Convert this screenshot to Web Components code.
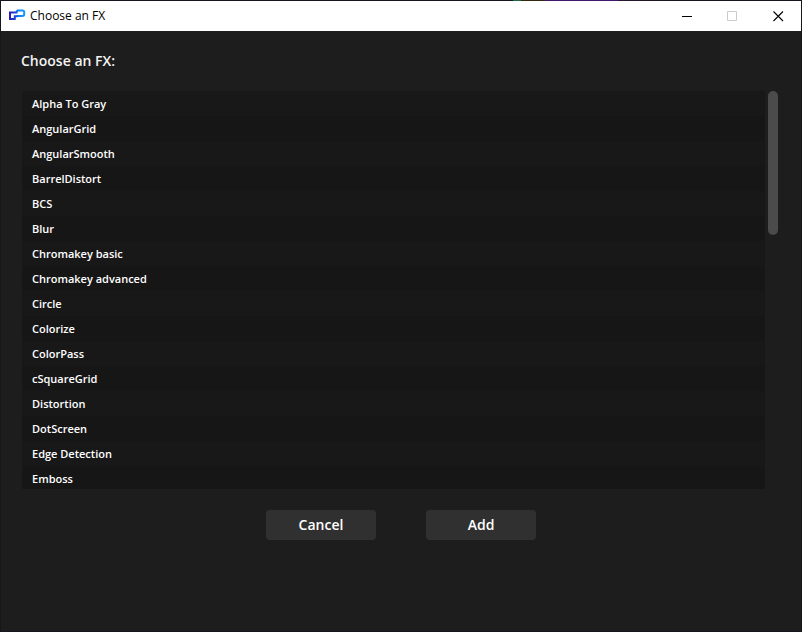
<!DOCTYPE html>
<html lang="en">
<head>
<meta charset="utf-8">
<title>Choose an FX</title>
<style>
html, body { height: 100%; margin: 0; }
body { background: #17151d; font-family: "Open Sans", "Noto Sans", sans-serif; }
</style>
</head>
<body>
<fx-window>
  <fx-titlebar slot="bar">Choose an FX</fx-titlebar>
  <fx-picker>
    <span slot="heading">Choose an FX:</span>
    <fx-list></fx-list>
    <fx-button slot="actions">Cancel</fx-button>
    <fx-button slot="actions">Add</fx-button>
  </fx-picker>
</fx-window>
<script>
class FxBase extends HTMLElement {
  constructor() {
    super();
    this.attachShadow({ mode: "open" }).innerHTML = this.constructor.markup;
  }
}

class FxWindow extends FxBase {
  static markup = `
    <style>
      :host { display: flex; flex-direction: column; box-sizing: border-box; height: 100%; padding: 1px;
        background: linear-gradient(90deg, #17151d 64%, #1a6b48 64%, #1a6b48 65%, #33270f 65%, #33270f 68%, #42166b 68%, #42166b 77%, #2a1530 77%, #17151d 84%) top / 100% 1px no-repeat; }
      main { flex: 1; background: #1d1d1d; }
    </style>
    <slot name="bar"></slot>
    <main><slot></slot></main>`;
}

class FxTitlebar extends FxBase {
  static markup = `
    <style>
      :host { display: flex; align-items: center; height: 30px; background: #fff; color: #000; font-size: 12px; line-height: 16px; }
      .logo { width: 17px; height: 14px; margin: 0 4px 0 8px; }
      .name { flex: 1; }
      button { width: 46px; height: 30px; padding: 0; border: 0; background: none; color: #000; display: grid; place-items: center; }
      button:disabled { color: #ccc; }
      button svg { width: 11px; height: 11px; fill: none; stroke: currentColor; }
      button:hover:enabled { background: #e5e5e5; }
      button:first-of-type svg { shape-rendering: crispEdges; }
    </style>
    <svg class="logo" viewBox="0 0 17 14" aria-hidden="true">
      <defs>
        <linearGradient id="a" gradientUnits="userSpaceOnUse" x1="0" y1="0" x2="10" y2="0"><stop stop-color="#2d16b4"/><stop offset="1" stop-color="#1862f2"/></linearGradient>
        <linearGradient id="b" gradientUnits="userSpaceOnUse" x1="6" y1="0" x2="16" y2="0"><stop stop-color="#0754d8"/><stop offset=".5" stop-color="#128cff"/><stop offset="1" stop-color="#1597ff"/></linearGradient>
      </defs>
      <path d="M8.5 3.4H1V10H5.8V7.2H9" fill="none" stroke="url(#a)" stroke-width="2"/>
      <path d="M7 3.2L8.7 1.4H13.6Q15.2 1.4 15.2 3V5.2Q15.2 6.9 13.4 6.9H7.5" fill="none" stroke="url(#b)" stroke-width="2"/>
    </svg>
    <span class="name"><slot></slot></span>
    <button aria-label="Minimize"><svg viewBox="0 0 11 11"><path d="M1 5.5H11"/></svg></button>
    <button aria-label="Maximize" disabled><svg viewBox="0 0 11 11"><path d="M.5 .5H9.5V9.5H.5Z"/></svg></button>
    <button aria-label="Close"><svg viewBox="0 0 11 11"><path d="M.5 .5L10 10M10 .5L.5 10" stroke-width="1.1"/></svg></button>`;
}

class FxPicker extends FxBase {
  static markup = `
    <style>
      :host { display: block; padding: 20px 23px 20px 20px; }
      h1 { margin: 0 0 20px; color: #f2f2f2; font-size: 14px; line-height: 20px; font-weight: 600; }
      .actions { display: flex; justify-content: center; gap: 50px; margin: 21px -3px 0 0; }
    </style>
    <h1><slot name="heading"></slot></h1>
    <slot></slot>
    <div class="actions"><slot name="actions"></slot></div>`;
}

class FxList extends FxBase {
  static markup = `
    <style>
      :host { display: flex; gap: 3px; height: 398px; margin-left: 1px; }
      ul { flex: 1; margin: 0; padding: 0; list-style: none; overflow: hidden; border-radius: 2px; background: #171717; }
      li { height: 25px; line-height: 25px; padding-left: 10px; color: #fff; font-size: 11px; font-weight: 600; background: #181818; }
      li:nth-child(even) { background: #161616; }
      .track { width: 10px; }
      .thumb { height: 144px; border-radius: 5px; background: #4b4b4b; }
    </style>
    <ul role="listbox" aria-label="Effects"></ul>
    <div class="track"><div class="thumb"></div></div>`;
  static effects = ["Alpha To Gray", "AngularGrid", "AngularSmooth", "BarrelDistort", "BCS", "Blur",
    "Chromakey basic", "Chromakey advanced", "Circle", "Colorize", "ColorPass", "cSquareGrid",
    "Distortion", "DotScreen", "Edge Detection", "Emboss"];
  constructor() {
    super();
    const list = this.shadowRoot.querySelector("ul");
    for (const name of FxList.effects) {
      const item = document.createElement("li");
      item.setAttribute("role", "option");
      item.textContent = name;
      list.append(item);
    }
  }
}

class FxButton extends FxBase {
  static markup = `
    <style>
      :host { display: block; }
      button { display: block; width: 110px; height: 30px; padding: 0; border: 0; border-radius: 4px; background: #303030; color: #fff; font: 600 14px/30px "Open Sans", "Noto Sans", sans-serif; }
      button:hover { background: #3a3a3a; }
    </style>
    <button type="button"><slot></slot></button>`;
}

customElements.define("fx-window", FxWindow);
customElements.define("fx-titlebar", FxTitlebar);
customElements.define("fx-picker", FxPicker);
customElements.define("fx-list", FxList);
customElements.define("fx-button", FxButton);
</script>
</body>
</html>
